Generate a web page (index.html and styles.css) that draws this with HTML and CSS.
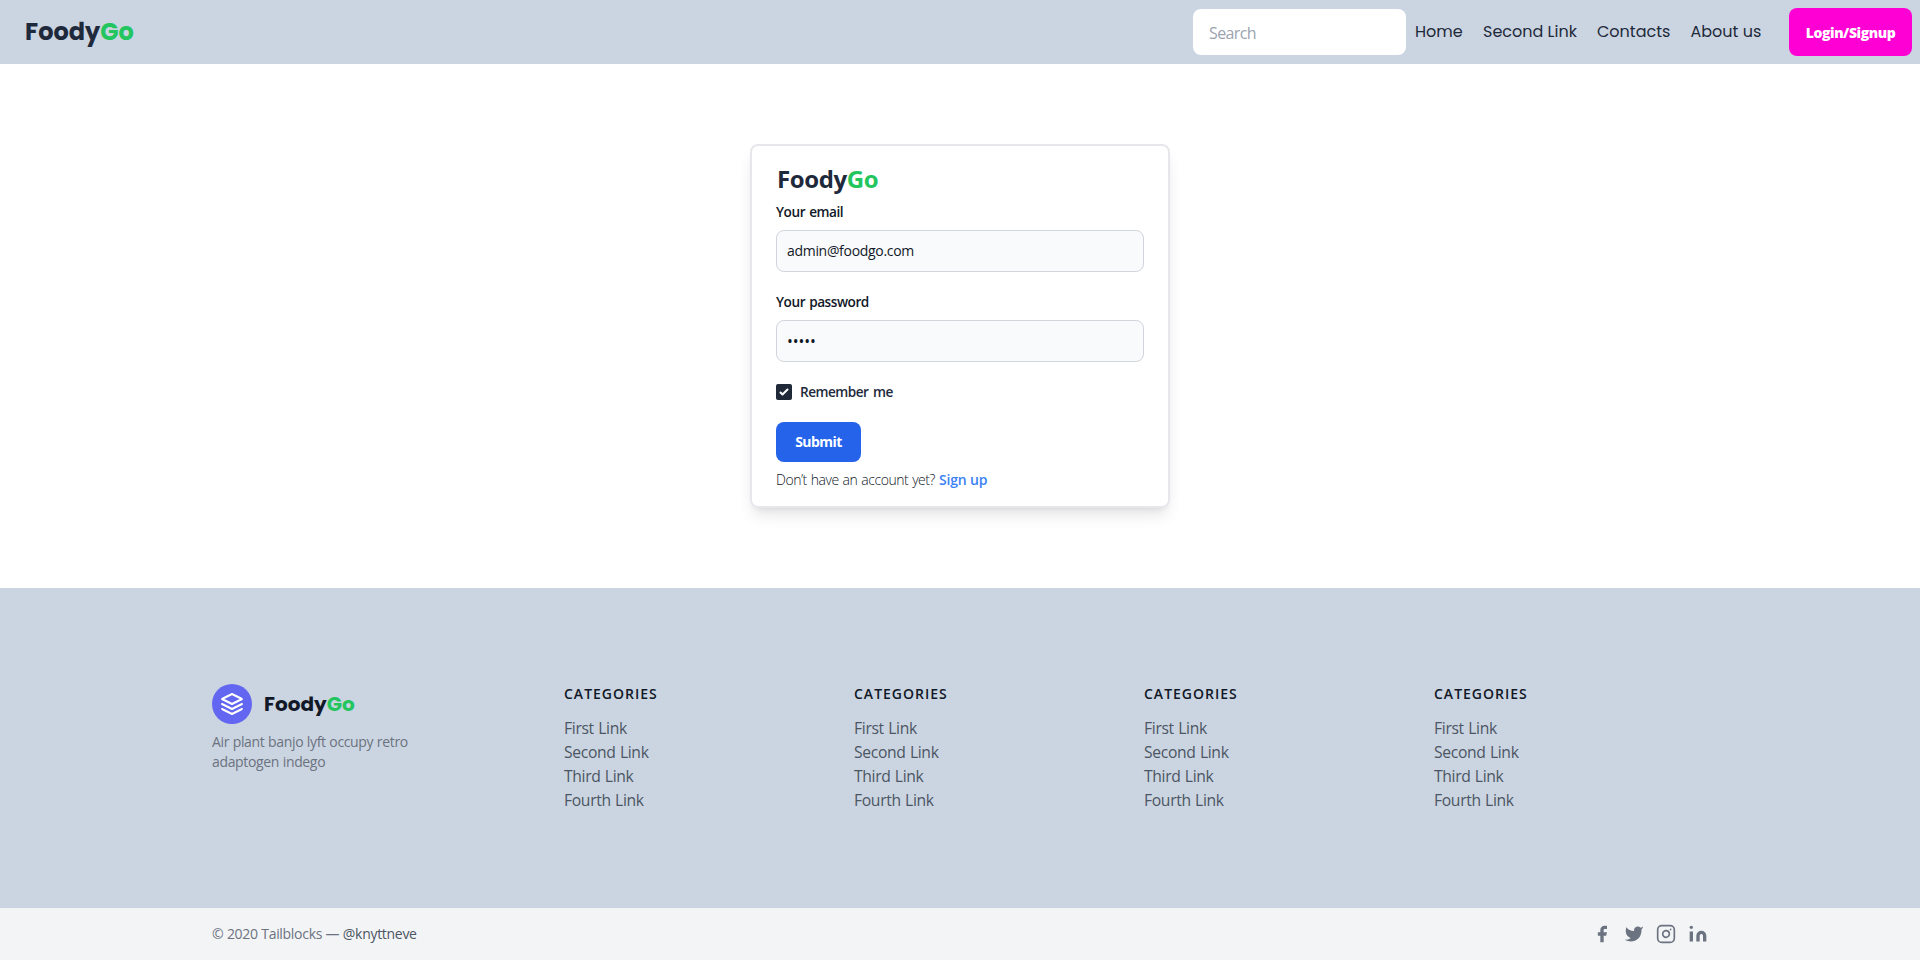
FILE: index.html
```html
<!DOCTYPE html>
<html lang="en">
<head>
<meta charset="utf-8">
<title>FoodyGo</title>
<link rel="stylesheet" href="styles.css">
</head>
<body>
<header class="topbar">
  <a class="logo brand">Foody<span class="go">Go</span></a>
  <div class="right">
    <input class="search" type="text" placeholder="Search">
    <nav class="nav"><a>Home</a><a>Second Link</a><a>Contacts</a><a>About us</a></nav>
    <button class="login">Login/Signup</button>
  </div>
</header>
<main class="main">
  <form class="card">
    <div class="card-logo">Foody<span class="go">Go</span></div>
    <label class="label">Your email</label>
    <input class="field" type="text" value="admin@foodgo.com">
    <label class="label">Your password</label>
    <input class="field password" type="password" value="admin">
    <div class="remember">
      <span class="check"><svg viewBox="0 0 16 16" width="16" height="16"><path d="M12.207 4.793a1 1 0 010 1.414l-5 5a1 1 0 01-1.414 0l-2-2a1 1 0 011.414-1.414L6.5 9.086l4.293-4.293a1 1 0 011.414 0z" fill="#fff"/></svg></span>
      <span>Remember me</span>
    </div>
    <button class="submit" type="button">Submit</button>
    <p class="signup">Don’t have an account yet? <a>Sign up</a></p>
  </form>
</main>
<footer>
  <div class="footer-main">
    <div class="about">
      <div class="footer-brand">
        <svg class="layers" viewBox="0 0 24 24" fill="none" stroke="#fff" stroke-width="2" stroke-linecap="round" stroke-linejoin="round"><path d="M12 2L2 7l10 5 10-5-10-5zM2 17l10 5 10-5M2 12l10 5 10-5"/></svg>
        <div class="footer-logo brand">Foody<span class="go">Go</span></div>
      </div>
      <p class="tagline">Air plant banjo lyft occupy retro<br>adaptogen indego</p>
    </div>
    <div class="cols">
      <section class="col"><h2>CATEGORIES</h2><ul><li>First Link</li><li>Second Link</li><li>Third Link</li><li>Fourth Link</li></ul></section>
      <section class="col"><h2>CATEGORIES</h2><ul><li>First Link</li><li>Second Link</li><li>Third Link</li><li>Fourth Link</li></ul></section>
      <section class="col"><h2>CATEGORIES</h2><ul><li>First Link</li><li>Second Link</li><li>Third Link</li><li>Fourth Link</li></ul></section>
      <section class="col"><h2>CATEGORIES</h2><ul><li>First Link</li><li>Second Link</li><li>Third Link</li><li>Fourth Link</li></ul></section>
    </div>
  </div>
  <div class="footer-bottom">
    <p class="copy">© 2020 Tailblocks — <a>@knyttneve</a></p>
    <div class="social">
      <svg viewBox="0 0 24 24" fill="currentColor"><path d="M18 2h-3a5 5 0 00-5 5v3H7v4h3v8h4v-8h3l1-4h-4V7a1 1 0 011-1h3z"/></svg>
      <svg viewBox="0 0 24 24" fill="currentColor"><path d="M23 3a10.9 10.9 0 01-3.14 1.53 4.48 4.48 0 00-7.86 3v1A10.66 10.66 0 013 4s-4 9 5 13a11.64 11.64 0 01-7 2c9 5 20 0 20-11.5a4.5 4.5 0 00-.08-.83A7.72 7.72 0 0023 3z"/></svg>
      <svg viewBox="0 0 24 24" fill="none" stroke="currentColor" stroke-width="2" stroke-linecap="round" stroke-linejoin="round"><rect width="20" height="20" x="2" y="2" rx="5" ry="5"/><path d="M16 11.37A4 4 0 1112.63 8 4 4 0 0116 11.37zm1.5-4.87h.01"/></svg>
      <svg viewBox="0 0 24 24" fill="currentColor"><path d="M16 8a6 6 0 016 6v7h-4v-7a2 2 0 00-2-2 2 2 0 00-2 2v7h-4v-7a6 6 0 016-6zM2 9h4v12H2z"/><circle cx="4" cy="4" r="2"/></svg>
    </div>
  </div>
</footer>
</body>
</html>
```
FILE: styles.css
```css
* { box-sizing: border-box; margin: 0; padding: 0; }
body { font-family: "Segoe UI", "Open Sans", "Noto Sans", sans-serif; font-size: 16px; line-height: 24px; color: #1e293b; background: #fff; }
button, input { font-family: inherit; border: 0; outline: 0; }
.brand { font-family: Poppins, Inter, sans-serif; font-weight: 700; }
.go { color: #22c55e; }

.topbar { height: 64px; background: #cbd5e1; display: flex; align-items: center; justify-content: space-between; padding: 0 8px 0 25px; }
.logo { font-size: 24px; line-height: 32px; }
.right { display: flex; align-items: center; }
.search { width: 213px; height: 46px; padding: 2px 16px 0; border-radius: 8px; font-size: 16px; letter-spacing: -.6px; background: #fff; margin-right: 9px; }
.search::placeholder { color: #9ca3af; opacity: 1; }
.nav { display: grid; grid-template-columns: 68px 114px 93.5px 98.5px; font-family: Poppins, Inter, sans-serif; font-size: 16px; }
.nav a { white-space: nowrap; }
.login { width: 123px; height: 48px; background: #ff00d4; color: #fff; border-radius: 8px; font-size: 14px; font-weight: 800; letter-spacing: -.42px; }

.main { height: 524px; display: flex; justify-content: center; align-items: flex-start; padding-top: 80px; }
.card { width: 420px; height: 364px; border: 2px solid #e5e7eb; border-radius: 8px; padding: 17px 24px 0; box-shadow: 0 10px 15px -3px rgba(0,0,0,.1), 0 4px 6px -4px rgba(0,0,0,.1); }
.card-logo { font-size: 24px; line-height: 32px; font-weight: 700; padding-left: 1px; letter-spacing: -.4px; margin-bottom: 7px; }
.label { display: block; font-size: 13.6px; line-height: 20px; font-weight: 600; letter-spacing: -.45px; word-spacing: 1px; color: #111827; margin-bottom: 8px; }
.field { display: block; width: 368px; height: 42px; border: 1px solid #d1d5db; border-radius: 8px; background: #f9fafb; padding: 9px 10px 11px; font-size: 14px; line-height: 20px; letter-spacing: -.31px; color: #111827; margin-bottom: 20px; }
.password { letter-spacing: -.1px; font-size: 15.5px; padding: 10px; }
.remember { display: flex; gap: 8px; align-items: center; font-size: 13.6px; font-weight: 600; line-height: 20px; letter-spacing: -.5px; word-spacing: 1.5px; }
.check { width: 16px; height: 16px; background: #1f2937; border-radius: 2px; display: flex; }
.submit { display: block; margin-top: 20px; width: 85px; height: 40px; padding-bottom: 1px; border-radius: 8px; background: #2563eb; color: #fff; font-size: 14px; font-weight: 700; letter-spacing: -.55px; }
.signup { font-size: 14px; line-height: 20px; font-weight: 300; letter-spacing: -.45px; word-spacing: .7px; color: #111827; margin-top: 8px; }
.signup a { font-weight: 600; letter-spacing: -.15px; word-spacing: 0; color: #3b82f6; }

.footer-main { height: 320px; background: #cbd5e1; padding: 96px 0 0 212px; display: flex; }
.about { width: 352px; flex-shrink: 0; }
.footer-brand { display: flex; align-items: center; gap: 12px; }
.layers { width: 40px; height: 40px; padding: 8px; border-radius: 50%; background: #6366f1; }
.footer-logo { font-size: 20px; line-height: 28px; color: #111827; }
.tagline { font-size: 14px; line-height: 20px; letter-spacing: -.34px; word-spacing: .3px; color: #6b7280; margin-top: 8px; }
.cols { display: grid; grid-template-columns: repeat(4, 290px); }
.col h2 { font-size: 14px; line-height: 20px; font-weight: 600; letter-spacing: 1px; color: #111827; margin-bottom: 12px; }
.col ul { list-style: none; color: #4b5563; font-size: 15.7px; letter-spacing: -.34px; word-spacing: .6px; }
.footer-bottom { height: 52px; background: #f3f4f6; padding: 0 212px; display: flex; justify-content: space-between; align-items: center; }
.copy { font-size: 14px; line-height: 20px; letter-spacing: -.3px; word-spacing: .2px; color: #6b7280; }
.copy a { color: #4b5563; }
.social { display: flex; gap: 12px; color: #6b7280; }
.social svg { width: 20px; height: 20px; }
```
